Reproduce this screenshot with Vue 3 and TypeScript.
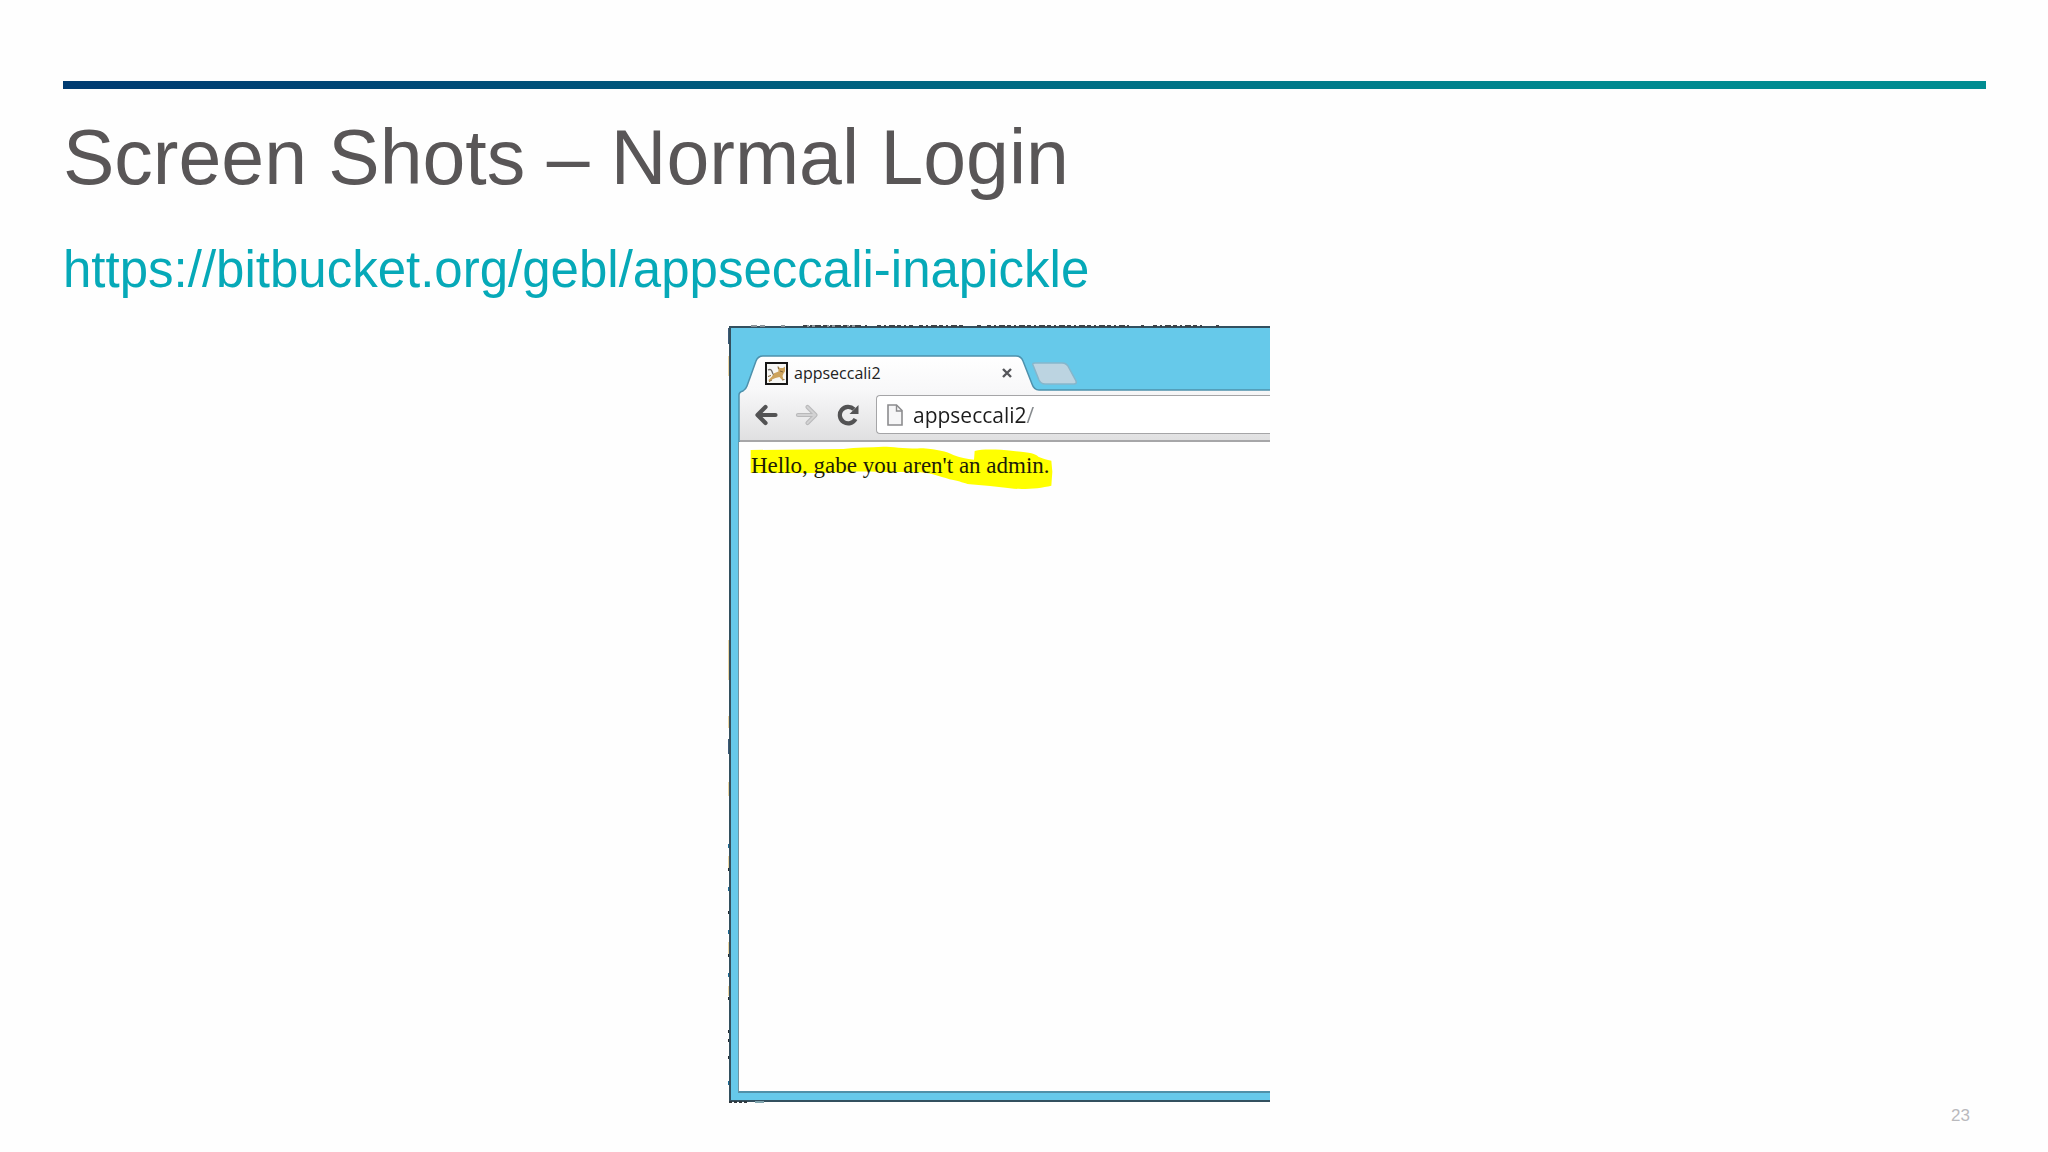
<script setup lang="ts">
import { ref } from 'vue'

const repoUrl = 'https://bitbucket.org/gebl/appseccali-inapickle'
const address = ref('appseccali2/')
</script>

<template>
  <main class="slide">
    <div class="rule"></div>
    <h1 class="title">Screen Shots – Normal Login</h1>
    <a class="repo" :href="repoUrl">{{ repoUrl }}</a>

    <div class="stage">
      <section class="browser" aria-label="Browser window">
        <svg class="scraps-top" width="542" height="2" aria-hidden="true">
          <path d="M22 1h14M52 1h4M74 1h58" stroke="#8a9399" stroke-width="2" stroke-dasharray="6 3 9 2" />
          <path d="M74 1h58M136 1h2M148 1h36M190 1h46M248 1h4M258 1h142M412 1h3M424 1h50M487 1h3" stroke="#3a4146" stroke-width="2" stroke-dasharray="4 3 2 3 6 2" />
        </svg>
        <svg class="scraps-left" width="2" height="776" aria-hidden="true">
          <path d="M1 2v16M1 413v15" stroke="#3d5a78" stroke-width="2" />
          <path d="M1 30v20M1 314v40M1 390v12M1 456v14M1 530v12M1 616v12M1 660v10" stroke="#ecd6a4" stroke-width="2" />
          <path d="M1 518v4M1 561v4M1 604v4M1 647v4M1 755v4" stroke="#1f6d96" stroke-width="2" />
          <path d="M1 542v3M1 585v3M1 628v3M1 671v3M1 704v3M1 713v3M1 730v3" stroke="#222c33" stroke-width="2" />
        </svg>
        <svg class="scraps-bottom" width="36" height="2" aria-hidden="true">
          <path d="M0 1h20" stroke="#30383d" stroke-width="2" stroke-dasharray="3 2" />
          <path d="M26 1h9" stroke="#7fa3ad" stroke-width="2" />
        </svg>

        <svg class="chrome" width="539" height="114" viewBox="0 0 539 114" aria-hidden="true">
          <defs>
            <linearGradient id="bar" x1="0" y1="28" x2="0" y2="112" gradientUnits="userSpaceOnUse">
              <stop offset="0" stop-color="#ffffff" />
              <stop offset="0.4" stop-color="#f8f8f9" />
              <stop offset="1" stop-color="#e0e0e1" />
            </linearGradient>
          </defs>
          <path d="M8 114V67Q8 64 12 63Q15 61 16 58L25 33Q27 28 32 28H285Q290 28 292 33L301 56Q303 62 308 62H541V114Z" fill="url(#bar)" stroke="#4e91ac" stroke-width="1.5" />
          <path d="M302 37Q301 35 304 35H331Q336 35 338 40L345 53Q346 56 343 56H314Q310 56 308 52Z" fill="#bcd4e1" stroke="#86b6cb" stroke-width="1.5" />
          <path d="M9 113H539" stroke="#a6a6a8" stroke-width="2" />
        </svg>

        <header class="tabs">
          <svg class="favicon" width="23" height="23" viewBox="0 0 23 23" aria-hidden="true">
            <rect x="1" y="1" width="21" height="21" fill="#f7f7f5" stroke="#161616" stroke-width="2" />
            <path d="M13 4.500L15 6H18L20 4.500V9.500L18.500 11.500L17.500 14L18.500 17.500H16.500L14.500 15L10.500 16L7 17.500L4 19.500L3.500 18L7 14.500L8.500 11.500L13.500 9.500Z" fill="#cda35c" />
            <path d="M3 8Q6 6.500 7 9.500T8.500 12" fill="none" stroke="#6f6a64" stroke-width="1.300" />
            <path d="M3 14.500L6 13.500M4 19.500L7 18M17 18L19.500 17.500M13 4.500L13.500 7M15 9L18 10" fill="none" stroke="#84663a" stroke-width="1" />
          </svg>
          <span class="tab-name">appseccali2</span>
          <button class="close" type="button" aria-label="Close tab">
            <svg width="12" height="12" viewBox="0 0 12 12"><path d="M2 2L10 10M10 2L2 10" stroke="#55565a" stroke-width="2.4" /></svg>
          </button>
        </header>

        <nav class="toolbar">
          <button class="tool" type="button" aria-label="Back">
            <svg width="24" height="22" viewBox="0 0 24 22"><path d="M11.500 3L3.500 11L11.500 19M4 11H21.500" fill="none" stroke="#535354" stroke-width="4.2" stroke-linejoin="round" stroke-linecap="round" /></svg>
          </button>
          <button class="tool" type="button" aria-label="Forward">
            <svg width="24" height="22" viewBox="0 0 24 22"><path d="M12.500 3L20.500 11L12.500 19M20 11H3" fill="none" stroke="#b9b9ba" stroke-width="4.2" stroke-linejoin="round" stroke-linecap="round" /><path d="M12.500 3L20.500 11L12.500 19M20 11H3" fill="none" stroke="#d2d2d3" stroke-width="2" stroke-linejoin="round" stroke-linecap="round" /></svg>
          </button>
          <button class="tool" type="button" aria-label="Reload">
            <svg width="24" height="22" viewBox="0 0 24 22"><path d="M19.500 15A8.300 8.300 0 1 1 18 5.200" fill="none" stroke="#535354" stroke-width="4.200" /><path d="M22.500 1V10H13.500Z" fill="#535354" /></svg>
          </button>
          <label class="omnibox">
            <svg width="16" height="22" viewBox="0 0 16 22" aria-hidden="true"><path d="M1 1H9.500L15 6.500V21H1Z" fill="#f6f6f7" stroke="#8c8c8e" stroke-width="1.6" /><path d="M9.500 1V7H15" fill="none" stroke="#8c8c8e" stroke-width="1.4" /></svg>
            <input v-model="address" class="address" type="text" aria-label="Address" />
          </label>
        </nav>

        <div class="page">
          <svg class="marker" width="320" height="60" viewBox="57 381 960 180" aria-hidden="true">
            <path d="M92 405L370 402C410 396 450 398 490 395C520 395 560 402 610 400C650 403 680 410 700 420C720 428 740 432 762 434L764 408C790 402 830 403 880 408C930 413 945 415 955 425C965 430 975 432 994 437L997 470L994 512C960 520 910 525 870 520C830 515 790 512 750 508C730 505 720 498 700 495C670 490 640 474 600 472C560 470 500 472 470 470C400 468 350 472 300 474L92 474Z" fill="#ffff00" />
          </svg>
          <p class="greeting">Hello, gabe you aren't an admin.</p>
        </div>
      </section>
    </div>

    <footer class="number">23</footer>
  </main>
</template>

<style>
body {
  background: #fefefe;
}
</style>

<style scoped>
.slide {
  box-sizing: border-box;
  min-height: 100vh;
  padding: 81px 62px 0 63px;
  display: flex;
  flex-direction: column;
  font-family: "Liberation Sans", Arial, sans-serif;
}
.rule {
  height: 8px;
  background: linear-gradient(90deg, #003b71 0%, #004675 15%, #007085 55%, #008a90 80%, #008c91 100%);
}
.title {
  margin: 24px 0 0;
  font-size: 77px;
  line-height: 88px;
  font-weight: 400;
  color: #595657;
}
.repo {
  align-self: flex-start;
  margin-top: 40px;
  font-size: 51px;
  line-height: 58px;
  color: #06a9b8;
  text-decoration: none;
}
.stage {
  flex: 1;
  display: flex;
  justify-content: center;
  padding-right: 50px;
  margin-top: 27px;
}
.browser {
  position: relative;
  box-sizing: border-box;
  width: 541px;
  display: flex;
  flex-direction: column;
  border: 2px solid #33505f;
  border-right: 0;
  background: #66c9ea;
}
.scraps-top {
  position: absolute;
  left: -2px;
  top: -3px;
}
.scraps-left {
  position: absolute;
  left: -3px;
  top: -2px;
  z-index: -1;
}
.scraps-bottom {
  position: absolute;
  left: -2px;
  bottom: -3px;
}
.chrome {
  position: absolute;
  left: 0;
  top: 0;
}
.tabs {
  position: relative;
  box-sizing: border-box;
  height: 62px;
  padding: 28px 0 0 34px;
  display: flex;
  align-items: center;
}
.tab-name {
  width: 207px;
  margin-left: 6px;
  font-family: "Open Sans", "Noto Sans", sans-serif;
  font-size: 16px;
  line-height: 24px;
  color: #222;
}
button {
  display: block;
  padding: 0;
  border: 0;
  background: none;
}
.close {
  width: 12px;
  height: 12px;
}
.close svg,
.tool svg {
  display: block;
}
.toolbar {
  position: relative;
  box-sizing: border-box;
  height: 52px;
  padding: 5px 0 8px 23px;
  display: flex;
  align-items: center;
}
.tool {
  margin-right: 17px;
}
.omnibox {
  flex: 1;
  box-sizing: border-box;
  height: 39px;
  margin-left: -1px;
  padding-left: 10px;
  display: flex;
  align-items: center;
  gap: 10px;
  border: 1px solid #a5a5a7;
  border-right: 0;
  border-radius: 4px 0 0 4px;
  background: #fff;
}
.address {
  flex: 1;
  min-width: 0;
  padding: 0;
  border: 0;
  outline: 0;
  font-family: "Open Sans", "Noto Sans", sans-serif;
  font-size: 21px;
  line-height: 30px;
  color: transparent;
  background: linear-gradient(90deg, #1c1c1c 114px, #85898c 114px);
  background-clip: text;
}
.page {
  position: relative;
  flex: 1;
  margin: 0 0 7px 7px;
  border-left: 1px solid #6f93a1;
  border-bottom: 2px solid #4f90a8;
  background: #fefefe;
}
.marker {
  position: absolute;
  left: 0;
  top: 0;
}
.greeting {
  position: relative;
  margin: 10px 0 0 12px;
  font-family: "Liberation Serif", "Times New Roman", serif;
  font-size: 23px;
  line-height: 28px;
  color: #1c1c08;
}
.number {
  height: 50px;
  padding: 4px 16px 0 0;
  box-sizing: border-box;
  font-size: 17px;
  line-height: 20px;
  text-align: right;
  color: #b9b9bd;
}
</style>
